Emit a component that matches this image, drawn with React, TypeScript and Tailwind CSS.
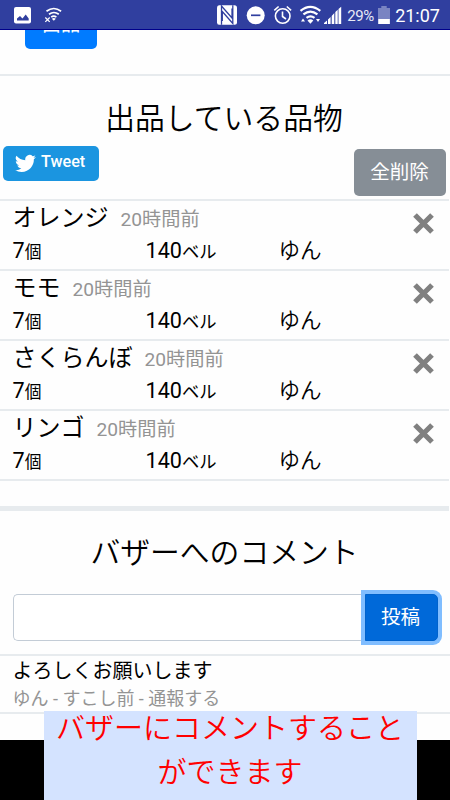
import React from "react";

const items = ["オレンジ", "モモ", "さくらんぼ", "リンゴ"];

function StatusBar() {
  return (
    <header className="relative z-10 flex h-[30px] shrink-0 items-center border-b border-[#00008b] bg-[#303f9f] text-white">
      <svg width="450" height="29" viewBox="0 0 450 29" className="shrink-0" fill="none">
        <rect x="14" y="7" width="17" height="16.500" rx="2" fill="#fff" />
        <path d="M17 20.500v-2l3-2.500 2.500 2.500 3.200-4 3 4v2z" fill="#303f9f" />
        <g stroke="#fff" strokeWidth="1.700">
          <path d="M46.500 11.200q7.300-5.400 14.600 0M49 14.300q5-3.600 9.800 0M51.200 17.100q2.600-1.900 5.200 0" />
          <path d="M45.300 17.500l4.400 4.400M49.700 17.500l-4.400 4.400" strokeWidth="1.200" />
        </g>
        <path d="M51.800 18.800q2-1.500 4 0l-2 2z" fill="#fff" />
        <path d="M219 5.300h15.500q2.500 0 2.500 2.500v14.500q0 2.500-2.500 2.500H219q-2 0-2-2.500V7.800q0-2.500 2-2.500z" fill="#fff" />
        <path d="M221.500 24.800V6l10.500 12V8.500M232.800 5.300V23.500L222.300 11.500V21" stroke="#303f9f" strokeWidth="1.300" />
        <circle cx="255.700" cy="15.300" r="9" fill="#fff" />
        <path d="M251 15.300h9.400" stroke="#303f9f" strokeWidth="1.700" />
        <g stroke="#fff" strokeWidth="1.600">
          <circle cx="282.700" cy="16" r="7.300" />
          <path d="M274.300 10.300l4.300-3.800M286.800 6.500l4.300 3.800M282.500 11.500v5l3.500 2.500" />
        </g>
        <g stroke="#fff" strokeWidth="2.200">
          <path d="M300.500 10.800q9.800-8 19.800 0M303.400 14.400q7-5.600 14 0M306.500 17.900q4-3.200 8 0" />
        </g>
        <path d="M307.500 20.500q2.900-2.400 5.800 0l-2.900 3.200z" fill="#fff" />
        <path d="M301 21.500l2-3 2 3zM316 19h4l-2 3z" fill="#fff" />
        <path d="M324 24v-1l3-2.600V24zM328 24v-4.500l2.600-2.500v7zM331.700 24v-8l2.600-3v11zM335.300 24V12l2.400-2.300V24zM338.500 24V9l2.700-2.300V24z" fill="#fff" />
        <path d="M378 8h3.300V6h5.400v2h3.300v16h-12z" fill="#7984c2" />
        <rect x="378.300" y="19" width="11.500" height="5" fill="#fff" />
        <text x="347.300" y="21" fill="#e8eaf6" className="font-['Roboto',sans-serif] text-[15px] font-normal" textLength="27">29%</text>
        <text x="395.300" y="22" fill="#fff" className="font-['Roboto',sans-serif] text-[18px] font-normal" textLength="44.500">21:07</text>
      </svg>
    </header>
  );
}

function ItemRow({ name }: { name: string }) {
  return (
    <li className="mr-px flex h-[70px] justify-between border-t-2 border-[#e7ebee] pl-[12.500px] pr-[15px]">
      <div className="flex-1 pt-px">
        <div className="flex h-8 items-baseline gap-3 leading-8">
          <span className="text-[24px]">{name}</span>
          <span className="text-[19.200px] text-[#949494]">20時間前</span>
        </div>
        <div className="grid h-8 grid-cols-[133px_133px_1fr] pt-px text-[21.600px] leading-8">
          <span>7<small className="text-[16.800px]">個</small></span>
          <span>140<small className="text-[17.300px]">ベル</small></span>
          <span className="font-[350]">ゆん</span>
        </div>
      </div>
      <svg width="21" height="21" viewBox="0 0 21 21" className="mt-[12px]">
        <path d="M2 2l17 17M19 2L2 19" stroke="#808080" strokeWidth="5.200" />
      </svg>
    </li>
  );
}

export default function App() {
  return (
    <div className="relative flex h-[800px] w-[450px] flex-col overflow-hidden bg-black font-['Roboto','Noto_Sans_CJK_JP',sans-serif] text-black">
      <StatusBar />
      <main className="h-[710px] shrink-0 overflow-hidden bg-[#fefefe]">
        <div className="-mt-[29px] ml-[25px] flex h-12 w-[72px] items-center justify-center rounded-[5px] bg-[#007bff] text-[19.200px] text-white">出品</div>
        <div className="mt-[25px] h-[2px] bg-[#e7ebee]" />
        <h2 className="mt-[19px] h-[47px] pr-[2px] text-center text-[29.800px] font-[350] leading-[48px]">出品している品物</h2>
        <div className="flex h-[57px] items-start justify-between pl-[3px] pr-1 pt-1">
          <button className="flex h-[35px] w-24 items-center rounded-[5px] bg-[#1b95e0] pb-[2px] pl-3 text-[16.200px] font-medium text-white">
            <svg width="21" height="21" viewBox="0 0 24 24" fill="currentColor" className="mr-[5px] mt-[2px]">
              <path d="M23.950 4.570a10 10 0 0 1-2.820.770 4.960 4.960 0 0 0 2.160-2.720 9.900 9.900 0 0 1-3.120 1.190 4.920 4.920 0 0 0-8.380 4.480A13.940 13.940 0 0 1 1.640 3.160a4.920 4.920 0 0 0 1.520 6.570 4.900 4.900 0 0 1-2.230-.610v.060a4.920 4.920 0 0 0 3.950 4.830 5 5 0 0 1-2.210.080 4.940 4.940 0 0 0 4.600 3.420A9.870 9.870 0 0 1 0 19.540a14 14 0 0 0 7.550 2.210c9.050 0 14-7.500 14-13.980 0-.210 0-.420-.020-.630a9.940 9.940 0 0 0 2.420-2.570z" />
            </svg>
            Tweet
          </button>
          <button className="mt-[3px] flex h-[47px] w-[92px] items-center justify-center rounded-[5px] bg-[#868e96] pr-px text-[19.500px] text-white">全削除</button>
        </div>
        <ul>
          {items.map((name) => <ItemRow key={name} name={name} />)}
        </ul>
        <div className="mr-px h-[2px] bg-[#e7ebee]" />
        <div className="mr-px mt-[25px] h-[5px] bg-[#e7ebee]" />
        <h2 className="mt-[18px] h-[47px] pr-px text-center text-[29.800px] font-[350] leading-[48px]">バザーへのコメント</h2>
        <form className="mt-[18px] flex h-[47px] pl-[13px]" onSubmit={(e) => e.preventDefault()}>
          <input aria-label="コメント" className="w-[352px] rounded-l-[5px] border border-r-0 border-[#c3ccd6] bg-white" />
          <button className="w-[73px] rounded-r-[5px] border border-[#0062cc] bg-[#0069d9] pr-[2px] text-[19.500px] text-white shadow-[0_0_0_4px_#80bdff]">投稿</button>
        </form>
        <section className="mt-[13px] h-[60px] border-y-2 border-[#e7ebee] pl-[12.500px] pt-px">
          <p className="h-[28px] text-[20px] leading-[28px]">よろしくお願いします</p>
          <p className="h-[28px] text-[18px] leading-[28px] text-[#949494]">ゆん - すこし前 - 通報する</p>
        </section>
      </main>
      <aside className="absolute left-[44px] top-[711px] h-[89px] w-[373px] bg-[#d4e3ff] pr-px text-center text-[29px] font-[350] leading-[43.500px] text-[#ff0000]">
        <p className="-mt-[3px]">バザーにコメントすること</p>
        <p>ができます</p>
      </aside>
    </div>
  );
}
